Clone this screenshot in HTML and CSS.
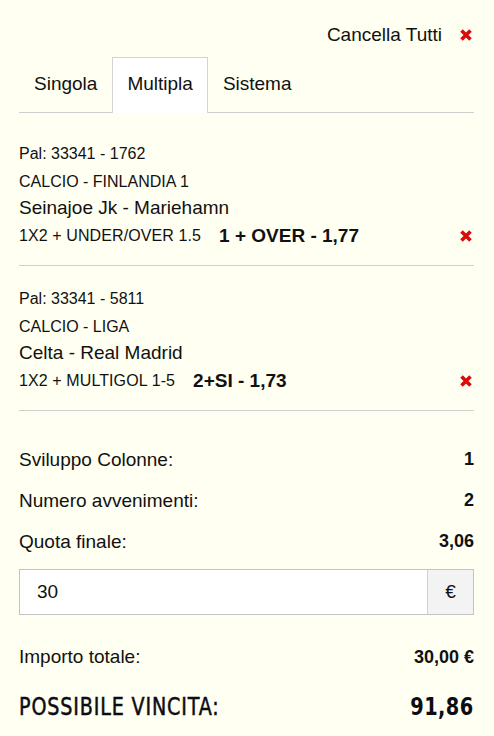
FILE: index.html
```html
<!DOCTYPE html>
<html lang="it">
<head>
    <meta charset="UTF-8">
    <meta name="viewport" content="width=device-width, initial-scale=1.0">
    <title>Schedina</title>
    <link rel="stylesheet" href="styles.css">
</head>
<body>
    <div class="slip">
        <!-- Header -->
        <div class="slip-header">
            <span>Cancella Tutti</span>
            <svg class="icon-x" viewBox="0 0 14 14"><path d="M2.5 2.5 L11.5 11.5 M11.5 2.5 L2.5 11.5"/></svg>
        </div>

        <!-- Tabs -->
        <ul class="tabs">
            <li>Singola</li>
            <li class="active">Multipla</li>
            <li>Sistema</li>
        </ul>

        <!-- Selected events -->
        <div class="bets">
            <div class="bet">
                <div class="bet-pal">Pal: 33341 - 1762</div>
                <div class="bet-league">CALCIO - FINLANDIA 1</div>
                <div class="bet-match">Seinajoe Jk - Mariehamn</div>
                <div class="bet-line">
                    <span class="bet-market">1X2 + UNDER/OVER 1.5</span>
                    <strong class="bet-pick">1 + OVER - 1,77</strong>
                    <svg class="icon-x" viewBox="0 0 14 14"><path d="M2.5 2.5 L11.5 11.5 M11.5 2.5 L2.5 11.5"/></svg>
                </div>
            </div>
            <div class="bet">
                <div class="bet-pal">Pal: 33341 - 5811</div>
                <div class="bet-league">CALCIO - LIGA</div>
                <div class="bet-match">Celta - Real Madrid</div>
                <div class="bet-line">
                    <span class="bet-market">1X2 + MULTIGOL 1-5</span>
                    <strong class="bet-pick">2+SI - 1,73</strong>
                    <svg class="icon-x" viewBox="0 0 14 14"><path d="M2.5 2.5 L11.5 11.5 M11.5 2.5 L2.5 11.5"/></svg>
                </div>
            </div>
        </div>

        <!-- Summary -->
        <div class="summary">
            <div class="row"><span>Sviluppo Colonne:</span><strong>1</strong></div>
            <div class="row"><span>Numero avvenimenti:</span><strong>2</strong></div>
            <div class="row"><span>Quota finale:</span><strong>3,06</strong></div>
        </div>

        <div class="stake">
            <input type="text" value="30">
            <span class="stake-currency">€</span>
        </div>

        <div class="totals">
            <div class="row row-total"><span>Importo totale:</span><strong>30,00 €</strong></div>
            <div class="row row-win">
                <span class="win-label">POSSIBILE VINCITA:</span>
                <strong class="win-value">91,86</strong>
            </div>
        </div>
    </div>
</body>
</html>
```

FILE: styles.css
```css
/* General Styles */
body {
    margin: 0;
    padding: 0;
    background-color: #fffff2;
    color: #111;
    font-family: "Liberation Sans", Arial, sans-serif;
    font-size: 19px;
}

.slip {
    padding: 0 20px 0 19px;
}

.icon-x {
    width: 14px;
    height: 14px;
    flex: none;
}

.icon-x path {
    stroke: #d90c0c;
    stroke-width: 3.6;
    fill: none;
}

/* Header */
.slip-header {
    display: flex;
    justify-content: flex-end;
    align-items: center;
    gap: 17px;
    height: 26px;
    padding: 22px 1px 9px 0;
    line-height: 26px;
}

/* Tabs */
.tabs {
    display: flex;
    list-style: none;
    margin: 0;
    padding: 0;
    border-bottom: 1px solid #cfcfcf;
}

.tabs li {
    padding: 14px 14px 17px;
    line-height: 23px;
    border: 1px solid transparent;
    border-bottom: none;
    margin-bottom: -1px;
}

.tabs li:first-child {
    padding-left: 15px;
    border-left: none;
}

.tabs li.active {
    background: #fff;
    border-color: #d4d4d4;
    padding-bottom: 18px;
}

/* Bets */
.bets {
    margin-top: 8px;
}

.bet {
    padding: 19px 0 13px;
    border-bottom: 1px solid #cfcfcf;
    font-size: 16px;
}

.bet-pal,
.bet-league {
    line-height: 28px;
}

.bet-match {
    font-size: 19px;
    line-height: 24px;
}

.bet-line {
    display: flex;
    align-items: center;
    height: 32px;
}

.bet-market {
    letter-spacing: 0.1px;
}

.bet-pick {
    font-size: 19px;
    margin-left: 18px;
    flex: 1;
}

.bet-line .icon-x {
    margin-right: 1px;
}

/* Summary */
.summary {
    padding-top: 28px;
}

.row {
    display: flex;
    justify-content: space-between;
    align-items: center;
    height: 41px;
}

.row strong {
    font-size: 18px;
}

.stake {
    display: flex;
    margin-top: 7px;
    height: 44px;
    border: 1px solid #c4c4c4;
    background: #fff;
}

.stake input {
    flex: 1;
    border: none;
    outline: none;
    padding: 0 17px;
    font: inherit;
    color: #111;
    background: transparent;
}

.stake-currency {
    width: 45px;
    display: flex;
    align-items: center;
    justify-content: center;
    background: #f3f3f3;
    border-left: 1px solid #d0d0d0;
}

/* Totals */
.totals {
    padding-top: 22px;
}

.row-total {
    height: 40px;
}

.row-win {
    height: 58px;
    font-family: "DejaVu Sans Condensed", "Liberation Sans", sans-serif;
    color: #0c0c14;
}

.win-label {
    display: inline-block;
    font-size: 25px;
    letter-spacing: 1px;
    -webkit-text-stroke: 0.5px currentColor;
    transform: scaleX(0.85);
    transform-origin: left center;
}

.row-win .win-value {
    display: inline-block;
    font-size: 25px;
    letter-spacing: 0.5px;
    transform: scaleX(0.86);
    transform-origin: right center;
}
```
